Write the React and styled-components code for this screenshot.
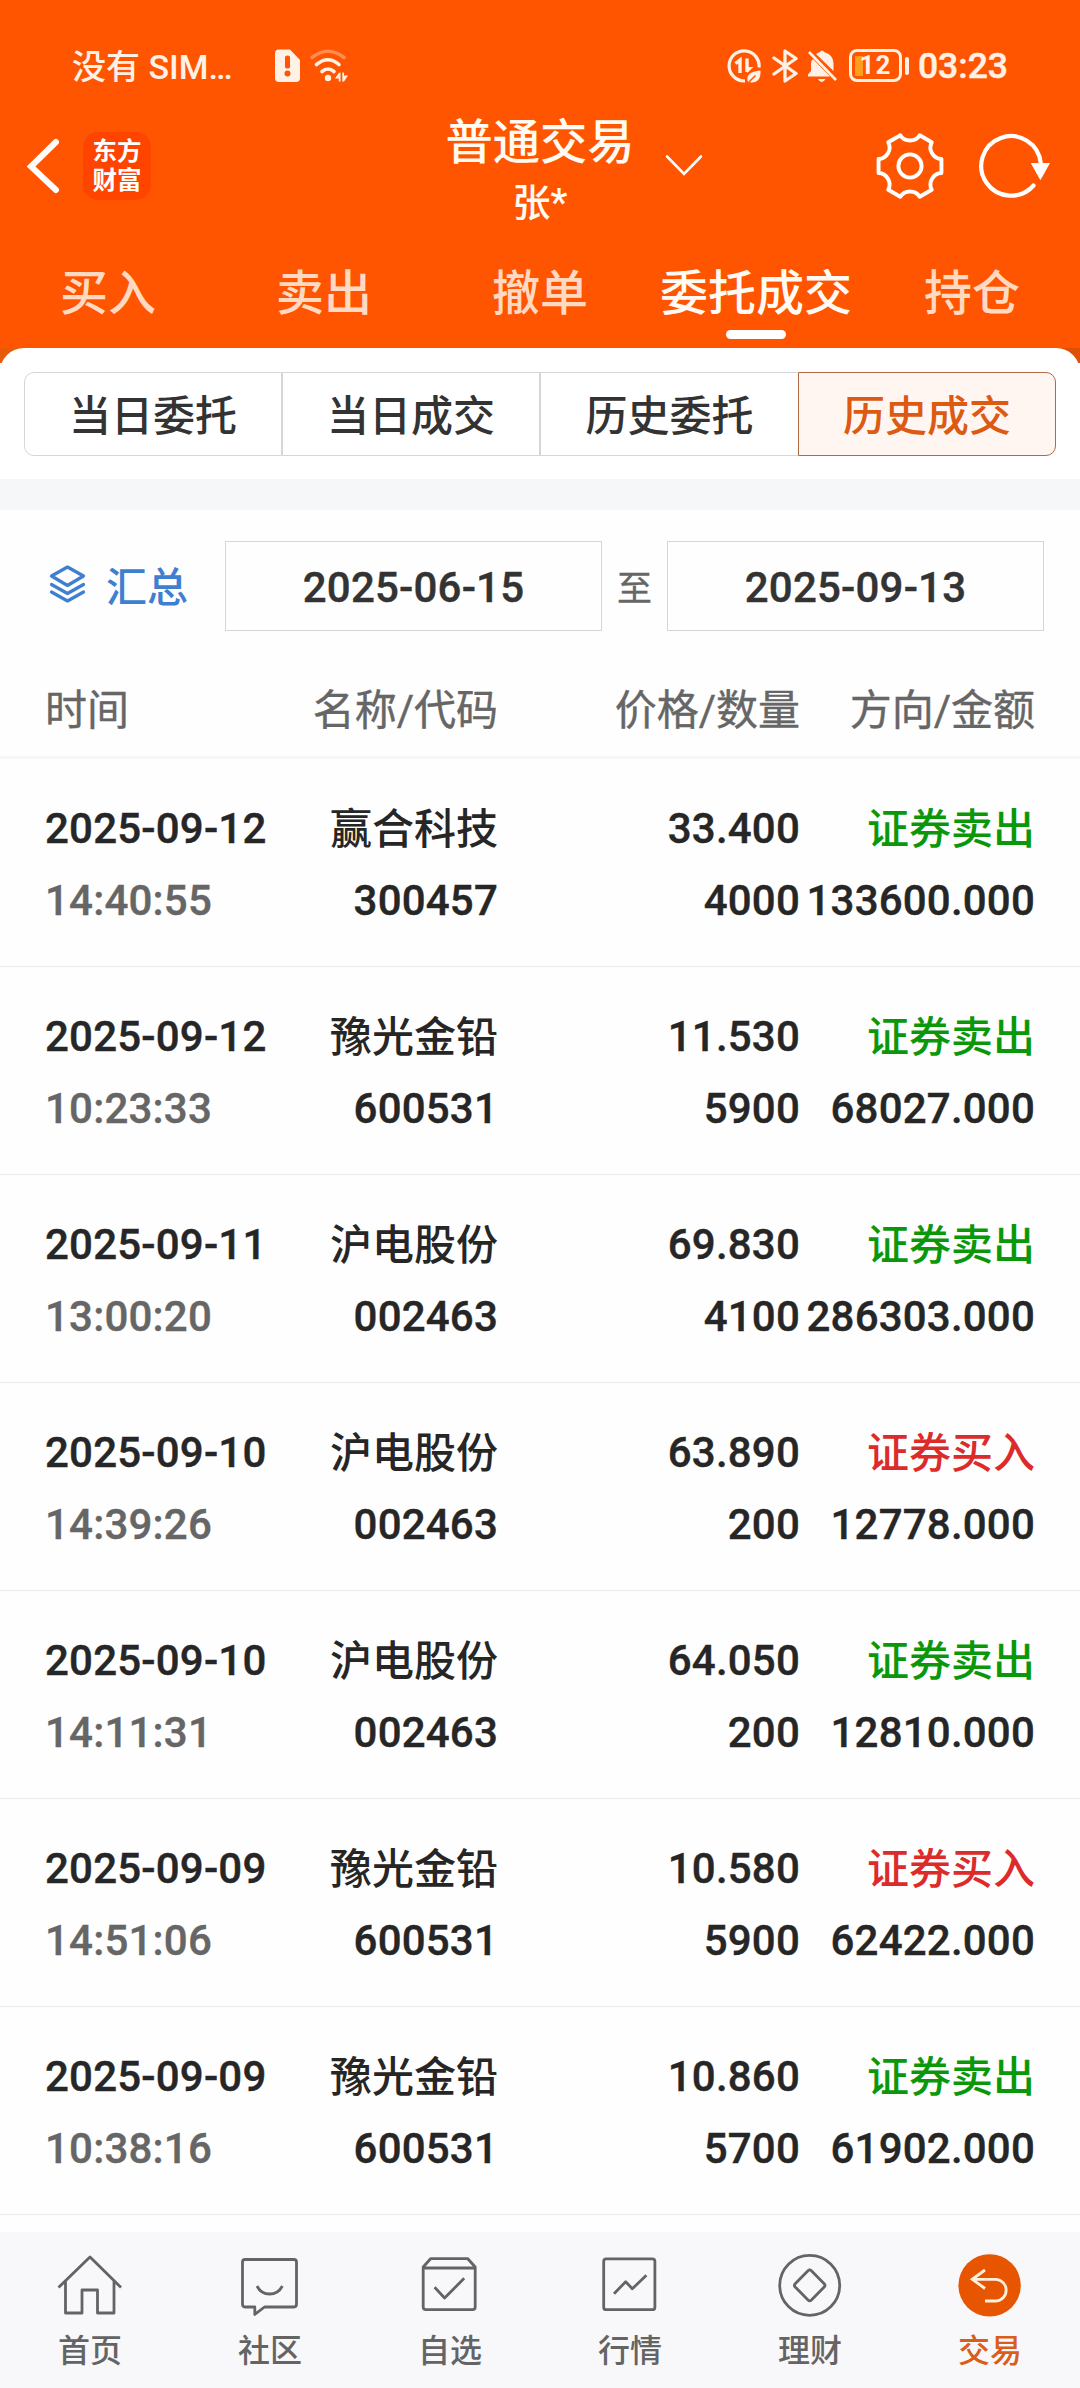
import React from "react";
import styled, { createGlobalStyle } from "styled-components";

const GlobalStyle = createGlobalStyle`
  * { box-sizing: border-box; }
  body {
    margin: 0;
    background: #fefefe;
    font-family: Roboto, "Noto Sans CJK SC", sans-serif;
    -webkit-font-smoothing: antialiased;
  }
`;

const Screen = styled.div`
  width: 1080px;
  height: 2388px;
  display: flex;
  flex-direction: column;
  overflow: hidden;
  background: #fefefe;
`;

const Header = styled.header`
  background: #ff5500;
  color: #fffaf2;
  height: 348px;
  flex: none;
`;

const StatusBar = styled.div`
  height: 112px;
  padding: 19px 72px 0 72px;
  display: flex;
  align-items: center;
  justify-content: space-between;
  color: #fff1e6;
  font-size: 34px;
  font-weight: 500;
  line-height: 40px;
`;

const StatusGroup = styled.div`
  display: flex;
  align-items: center;
`;

const Carrier = styled.span`
  width: 203px;
  padding-top: 2px;
  white-space: nowrap;
`;

const Clock = styled.span`
  margin-left: 9px;
  padding-top: 1px;
  font-size: 35.5px;
  -webkit-text-stroke: 0.5px currentColor;
`;

const Battery = styled.span`
  margin-left: 12px;
  width: 53px;
  height: 33px;
  border: 3px solid #fff1e6;
  border-radius: 8px;
  display: flex;
  align-items: center;
  justify-content: center;
  font-size: 26px;
  font-weight: 700;
  letter-spacing: 1px;
  line-height: 27px;
  background: linear-gradient(#ff9d1c, #ff9d1c) 3px 4px / 8px 20px no-repeat;
`;

const BatteryTip = styled.span`
  margin-left: 3px;
  width: 4px;
  height: 18px;
  border-radius: 2px;
  background: #fff1e6;
`;

const TitleBar = styled.div`
  height: 124px;
  display: grid;
  grid-template-columns: 420px 240px 420px;
`;

const TitleLeft = styled.div`
  display: flex;
  align-items: center;
  height: 108px;
  padding-left: 26px;
`;

const TitleRight = styled.div`
  display: flex;
  align-items: center;
  height: 108px;
`;

const Logo = styled.div`
  margin-left: 23px;
  width: 68px;
  height: 68px;
  padding: 3px 9px 0;
  border-radius: 15px;
  background: #ff4400;
  color: #fff;
  font-family: "Noto Sans CJK SC", sans-serif;
  font-weight: 700;
  font-size: 24.5px;
  line-height: 29px;
  text-align: center;
  word-break: break-all;
`;

const TitleText = styled.div`
  display: flex;
  flex-direction: column;
  align-items: center;
  padding-top: 1px;
`;

const Title = styled.div`
  font-size: 47.3px;
  font-weight: 500;
  line-height: 60px;
`;

const Account = styled.div`
  padding-top: 2px;
  font-size: 38px;
  font-weight: 500;
  line-height: 56px;
`;

const TabRow = styled.nav`
  display: grid;
  grid-template-columns: repeat(5, 1fr);
  height: 112px;
`;

const Tab = styled.div`
  display: flex;
  flex-direction: column;
  align-items: center;
  padding-top: 28px;
  font-size: 48px;
  line-height: 60px;
  font-weight: 500;
  white-space: nowrap;
  color: ${(p) => (p.$active ? "#fffaf4" : "#ffd9c2")};

  &::after {
    content: "";
    margin-top: 6px;
    width: 60px;
    height: 9px;
    border-radius: 5px;
    background: ${(p) => (p.$active ? "#fff" : "transparent")};
  }
`;

const CornerStrip = styled.div`
  height: 15px;
  flex: none;
  overflow: hidden;
  background: linear-gradient(90deg, #e85908 50%, #dd5006 50%);

  &::before {
    content: "";
    display: block;
    height: 60px;
    border-radius: 24px;
    background: #fff;
  }
`;

const SegmentPanel = styled.section`
  flex: none;
  height: 116px;
  padding: 9px 24px 0;
  background: #fff;
`;

const Segments = styled.div`
  display: grid;
  grid-template-columns: repeat(4, 1fr);
  height: 84px;
`;

const Segment = styled.div`
  display: flex;
  align-items: center;
  justify-content: center;
  font-size: 42px;
  border: 1px solid ${(p) => (p.$active ? "#b06a45" : "#d4d7d9")};
  background: ${(p) => (p.$active ? "#fff6f2" : "#fff")};
  color: ${(p) => (p.$active ? "#dc5a12" : "#333")};
  font-weight: 500;
  padding-bottom: 3px;

  &:first-child { border-radius: 10px 0 0 10px; }
  &:last-child { border-radius: 0 10px 10px 0; }
  &:nth-child(3) { border-right: 0; }
`;

const Band = styled.div`
  flex: none;
  height: 31px;
  background: #f6f7f9;
`;

const FilterRow = styled.section`
  flex: none;
  display: flex;
  align-items: center;
  height: 151px;
  padding: 0 36px 0 49px;
`;

const Summary = styled.div`
  width: 176px;
  padding-bottom: 3px;
  display: flex;
  align-items: center;
  gap: 20px;
  color: #3f7fd0;
  font-size: 41px;
  font-weight: 500;
`;

const DateBox = styled.div`
  width: 377px;
  height: 90px;
  padding-top: 4px;
  border: 1px solid #d6d6d6;
  display: flex;
  align-items: center;
  justify-content: center;
  font-size: 42px;
  font-weight: 500;
  letter-spacing: 0.2px;
  -webkit-text-stroke: 0.4px currentColor;
  color: #333;
`;

const To = styled.span`
  flex: 1;
  text-align: center;
  font-size: 35px;
  color: #666;
  -webkit-text-stroke: 0.3px currentColor;
`;

const grid = `
  display: grid;
  grid-template-columns: 235px 218px 302px 235px;
  padding-left: 45px;
  padding-right: 45px;
`;

const TableHead = styled.div`
  ${grid}
  flex: none;
  height: 98px;
  border-bottom: 3px solid #f5f6f7;
  color: #666;
  font-size: 42px;
  line-height: 100px;
  -webkit-text-stroke: 0.4px currentColor;
`;

const Cell = styled.div`
  text-align: ${(p) => (p.$left ? "left" : "right")};
  white-space: nowrap;
`;

const Rows = styled.main`
  flex: none;
  height: 1473px;
`;

const Row = styled.div`
  ${grid}
  height: 208px;
  padding-top: 34px;
  border-bottom: 1px solid #ebebeb;
  font-size: 42px;
  font-weight: 500;
  line-height: 72px;
  color: #262626;
`;

const Line = styled.div`
  height: 72px;
  display: flex;
  justify-content: ${(p) => (p.$left ? "flex-start" : "flex-end")};
  color: ${(p) => p.$color || "inherit"};
  letter-spacing: 0.2px;
  -webkit-text-stroke: 0.4px currentColor;
`;

const NameLine = styled(Line)`
  padding-top: 1px;
  letter-spacing: 0;
  -webkit-text-stroke: 0;
`;

const BottomNav = styled.footer`
  flex: 1;
  display: grid;
  grid-template-columns: repeat(6, 1fr);
  background: #f8f8fa;
`;

const NavItem = styled.div`
  display: flex;
  flex-direction: column;
  align-items: center;
  padding-top: 21px;
  font-size: 32px;
  line-height: 40px;
  font-weight: 500;
  color: ${(p) => (p.$active ? "#d95e1b" : "#646464")};

  svg { display: block; margin-bottom: 12px; }
`;

const SimIcon = () => (
  <svg width="25" height="33" viewBox="0 0 25 33">
    <path fill="currentColor" fillRule="evenodd" d="M4 0.5H15L25 11V29Q25 33 21 33H4Q0 33 0 29V4.500Q0 0.500 4 0.500ZM10 8V18Q10 19.500 12.500 19.500T15 18V8Q15 6.500 12.500 6.500T10 8ZM12.500 21.500A3 3 0 1 0 12.500 27.500A3 3 0 1 0 12.500 21.500Z" />
  </svg>
);

const WifiIcon = () => (
  <svg width="38" height="34" viewBox="0 0 38 34" fill="none" stroke="currentColor" strokeWidth="3.600" strokeLinecap="round" style={{ marginLeft: 10 }}>
    <path d="M2 8.500Q18 -4 34 8.500" opacity=".35" />
    <path d="M6.500 15.500Q18 6 29 15.500" />
    <path d="M12 22.500Q18 17.500 24 22.500" />
    <circle cx="18" cy="29" r="3.200" fill="currentColor" stroke="none" />
    <path d="M30.500 23.500V32.500H28.800V29.500H25L28.800 24ZM32.300 23.500H34V26.500H38L34 32.500H32.300Z" fill="currentColor" stroke="none" />
  </svg>
);

const DataSaverIcon = () => (
  <svg width="35" height="34" viewBox="0 0 35 34" fill="none" stroke="currentColor" strokeWidth="3.200">
    <path d="M18 31.800A15 15 0 1 1 32 18.500" />
    <path d="M8.500 14.500L13 11V24M20 9.500V23" strokeWidth="3.400" />
    <path d="M20 18H26.500L20 24Z" fill="currentColor" stroke="none" />
    <path d="M21 33Q17.500 23 33.500 21.500Q34 34 24 33.500Z" fill="currentColor" stroke="none" />
    <path d="M21 34L28.500 26.500" stroke="#ff5500" strokeWidth="1.400" />
  </svg>
);

const BluetoothIcon = () => (
  <svg width="26" height="34" viewBox="0 0 26 34" fill="none" stroke="currentColor" strokeWidth="3.300" strokeLinejoin="round" strokeLinecap="round" style={{ marginLeft: 10 }}>
    <path d="M2 9L24 24.500L13 32V2L24 9.500L2 25" />
  </svg>
);

const BellOffIcon = () => (
  <svg width="30" height="34" viewBox="0 0 30 34" style={{ marginLeft: 9 }}>
    <path fill="currentColor" d="M6 10L23 27.500H1V25.500L4 22V14Q4 12 6 10ZM9 5Q11 3.500 12.500 3.200Q15 0 17.500 3.200Q26 5.500 26.500 14V22ZM11 30H18.500Q17 33 14.700 33T11 30Z" />
    <path d="M2 3L29 31" stroke="currentColor" strokeWidth="2.600" />
  </svg>
);

const BackIcon = () => (
  <svg width="34" height="60" viewBox="0 0 34 60" fill="none" stroke="#fff" strokeWidth="6" strokeLinecap="round" strokeLinejoin="miter">
    <path d="M30 6L5 30.500L30 54" />
  </svg>
);

const ChevronDown = () => (
  <svg width="38" height="24" viewBox="0 0 38 24" fill="none" stroke="#fff" strokeWidth="2.600" strokeLinecap="round" style={{ marginLeft: 5, marginTop: -3 }}>
    <path d="M2 3.500L19 21L36 3.500" />
  </svg>
);

const polar = (r, deg) => [r * Math.cos((deg * Math.PI) / 180), r * Math.sin((deg * Math.PI) / 180)];
const pt = ([x, y]) => `${x.toFixed(2)},${y.toFixed(2)}`;
const gearPath = [0, 60, 120, 180, 240, 300]
  .map((a, i) => {
    const start = `${i ? "L" : "M"}${pt(polar(32.2, a - 12.5))}`;
    return `${start} L${pt(polar(32.2, a + 12.5))} C${pt(polar(24.3, a + 17))} ${pt(polar(24.3, a + 43))} ${pt(polar(32.2, a + 47.5))}`;
  })
  .join(" ");

const GearIcon = () => (
  <svg width="70" height="70" viewBox="-35 -35 70 70" fill="none" stroke="#fff" strokeWidth="3.900" strokeLinejoin="round" style={{ marginLeft: 172 }}>
    <path d={gearPath + "Z"} />
    <circle r="11.600" />
  </svg>
);

const RefreshIcon = () => (
  <svg width="74" height="70" viewBox="-33 -35 74 70" fill="none" stroke="#fff" strokeWidth="4.200" strokeLinecap="round" style={{ marginLeft: 33 }}>
    <path d="M22.500 19.500A29.800 29.800 0 1 1 29.700 -3" />
    <path d="M19.700 -3H39L29.400 14.300Z" fill="#fff" stroke="none" />
  </svg>
);

const LayersIcon = () => (
  <svg width="37" height="40" viewBox="0 0 37 40" fill="none" stroke="#3f7fd0" strokeWidth="3.200" strokeLinejoin="round" strokeLinecap="round">
    <path d="M18.500 3L34.500 12L18.500 21.500L2.500 12Z" />
    <path d="M2.500 20.500L18.500 29.500L34.500 20.500M2.500 28L18.500 37L34.500 28" />
  </svg>
);

const NavSvg = ({ children }) => (
  <svg width="66" height="66" viewBox="0 0 66 66" fill="none" stroke="#646464" strokeWidth="2.800" strokeLinejoin="round">
    {children}
  </svg>
);

const navItems = [
  ["首页", <path d="M1.500 34.500L33 4L64 34.500M8.500 28V60H25V37H40.500V60H57V28" />],
  ["社区", <><path d="M8 6.500H57Q59.500 6.500 59.500 9V51Q59.500 54 57 54H27.500L17.800 61.500V54H8Q5.500 54 5.500 51V9Q5.500 6.500 8 6.500Z" /><path d="M20 33Q24 41 32.600 41T45.300 33" /></>],
  ["自选", <><path d="M6.200 15H58.200V54Q58.200 56.700 55.500 56.700H9Q6.200 56.700 6.200 54V14L13.600 5.700H50.800L58.200 14V16" /><path d="M17.600 34.300L27.600 45L47.200 25.300" /></>],
  ["行情", <><rect x="6.700" y="5.900" width="51.200" height="50.800" rx="2.500" /><path d="M17 40.700L28.700 28.700L35.300 35.700L49.400 22.300" /></>],
  ["理财", <><circle cx="32.700" cy="32.400" r="30" /><path d="M31 17.800Q32.700 16 34.400 17.800L47.200 30.700Q48.800 32.400 47.200 34L34.400 47Q32.700 48.600 31 47L18.200 34Q16.600 32.400 18.200 30.700Z" /></>],
  ["交易", <><circle cx="32.600" cy="32.400" r="31.200" fill="#e85500" stroke="none" /><path d="M28 17L15.200 26.300L28 35.500M15.200 26.300H39.300A10.900 10.900 0 0 1 39.300 48H28" stroke="#fff0dc" strokeLinejoin="miter" /></>],
];

const trades = [
  ["2025-09-12", "14:40:55", "赢合科技", "300457", "33.400", "4000", "sell", "133600.000"],
  ["2025-09-12", "10:23:33", "豫光金铅", "600531", "11.530", "5900", "sell", "68027.000"],
  ["2025-09-11", "13:00:20", "沪电股份", "002463", "69.830", "4100", "sell", "286303.000"],
  ["2025-09-10", "14:39:26", "沪电股份", "002463", "63.890", "200", "buy", "12778.000"],
  ["2025-09-10", "14:11:31", "沪电股份", "002463", "64.050", "200", "sell", "12810.000"],
  ["2025-09-09", "14:51:06", "豫光金铅", "600531", "10.580", "5900", "buy", "62422.000"],
  ["2025-09-09", "10:38:16", "豫光金铅", "600531", "10.860", "5700", "sell", "61902.000"],
];

const sides = {
  sell: { label: "证券卖出", color: "#0a980a" },
  buy: { label: "证券买入", color: "#dc2b2b" },
};

export default function App() {
  return (
    <>
      <GlobalStyle />
      <Screen>
        <Header>
          <StatusBar>
            <StatusGroup>
              <Carrier>没有 SIM…</Carrier>
              <SimIcon />
              <WifiIcon />
            </StatusGroup>
            <StatusGroup>
              <DataSaverIcon />
              <BluetoothIcon />
              <BellOffIcon />
              <Battery>12</Battery>
              <BatteryTip />
              <Clock>03:23</Clock>
            </StatusGroup>
          </StatusBar>
          <TitleBar>
            <TitleLeft>
              <BackIcon />
              <Logo>东方财富</Logo>
            </TitleLeft>
            <TitleText>
              <Title>普通交易</Title>
              <Account>张*</Account>
            </TitleText>
            <TitleRight>
              <ChevronDown />
              <GearIcon />
              <RefreshIcon />
            </TitleRight>
          </TitleBar>
          <TabRow>
            {["买入", "卖出", "撤单", "委托成交", "持仓"].map((t) => (
              <Tab key={t} $active={t === "委托成交"}>{t}</Tab>
            ))}
          </TabRow>
        </Header>
        <CornerStrip />
        <SegmentPanel>
          <Segments>
            {["当日委托", "当日成交", "历史委托", "历史成交"].map((t) => (
              <Segment key={t} $active={t === "历史成交"}>{t}</Segment>
            ))}
          </Segments>
        </SegmentPanel>
        <Band />
        <FilterRow>
          <Summary>
            <LayersIcon />
            汇总
          </Summary>
          <DateBox>2025-06-15</DateBox>
          <To>至</To>
          <DateBox>2025-09-13</DateBox>
        </FilterRow>
        <TableHead>
          <Cell $left>时间</Cell>
          <Cell>名称/代码</Cell>
          <Cell>价格/数量</Cell>
          <Cell>方向/金额</Cell>
        </TableHead>
        <Rows>
          {trades.map(([date, time, name, code, price, qty, side, amount]) => (
            <Row key={date + time}>
              <Cell $left>
                <Line $left>{date}</Line>
                <Line $left $color="#666">{time}</Line>
              </Cell>
              <Cell>
                <NameLine>{name}</NameLine>
                <Line>{code}</Line>
              </Cell>
              <Cell>
                <Line>{price}</Line>
                <Line>{qty}</Line>
              </Cell>
              <Cell>
                <NameLine $color={sides[side].color}>{sides[side].label}</NameLine>
                <Line>{amount}</Line>
              </Cell>
            </Row>
          ))}
        </Rows>
        <BottomNav>
          {navItems.map(([label, icon]) => (
            <NavItem key={label} $active={label === "交易"}>
              <NavSvg>{icon}</NavSvg>
              {label}
            </NavItem>
          ))}
        </BottomNav>
      </Screen>
    </>
  );
}
